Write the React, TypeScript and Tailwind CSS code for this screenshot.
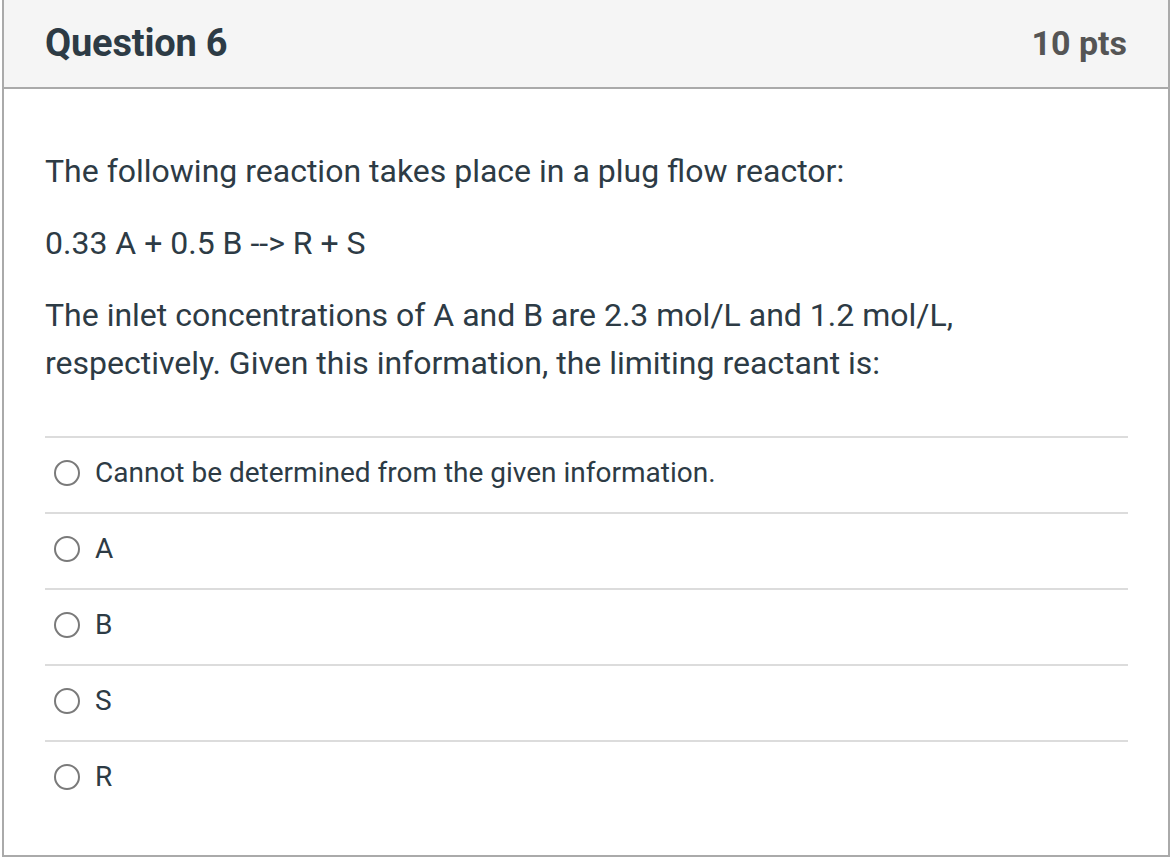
const answers = [
  "Cannot be determined from the given information.",
  "A",
  "B",
  "S",
  "R",
]

function Radio() {
  return <span className="w-[26px] h-[26px] rounded-full border-2 border-[#7a7a7a] bg-white flex-shrink-0" />
}

export default function App() {
  return (
    <div className="w-[1174px] h-[862px] bg-white font-['Roboto',sans-serif] text-[#2d3b45]">
      <div className="ml-[2px] w-[1168px] h-[857px] border-2 border-t-0 border-[#aaaaaa] flex flex-col">
        {/* Header */}
        <div className="h-[89px] bg-[#f5f5f5] border-b-2 border-[#aaaaaa] flex items-center justify-between pl-[41px] pr-[41px] pb-[1px]">
          <h2 className="text-[38px] font-bold leading-none tracking-[-0.2px]">Question 6</h2>
          <span className="text-[34px] font-bold leading-none text-[#555555]">10 pts</span>
        </div>

        {/* Body */}
        <div className="pl-[41px] pr-[40px] pt-[58px]">
          <div className="text-[32px] leading-[48px] flex flex-col gap-[24px]">
            <p>The following reaction takes place in a plug flow reactor:</p>
            <p>0.33 A + 0.5 B --&gt; R + S</p>
            <p>
              The inlet concentrations of A and B are 2.3 mol/L and 1.2 mol/L,
              <br />
              respectively. Given this information, the limiting reactant is:
            </p>
          </div>

          <div className="mt-[49px]">
            {answers.map((a) => (
              <div key={a} className="h-[76px] border-t-2 border-[#dcdcdc] flex items-center gap-[15px] pl-[9px] pb-[4px]">
                <Radio />
                <span className="text-[28px] leading-none">{a}</span>
              </div>
            ))}
          </div>
        </div>
      </div>
    </div>
  )
}
